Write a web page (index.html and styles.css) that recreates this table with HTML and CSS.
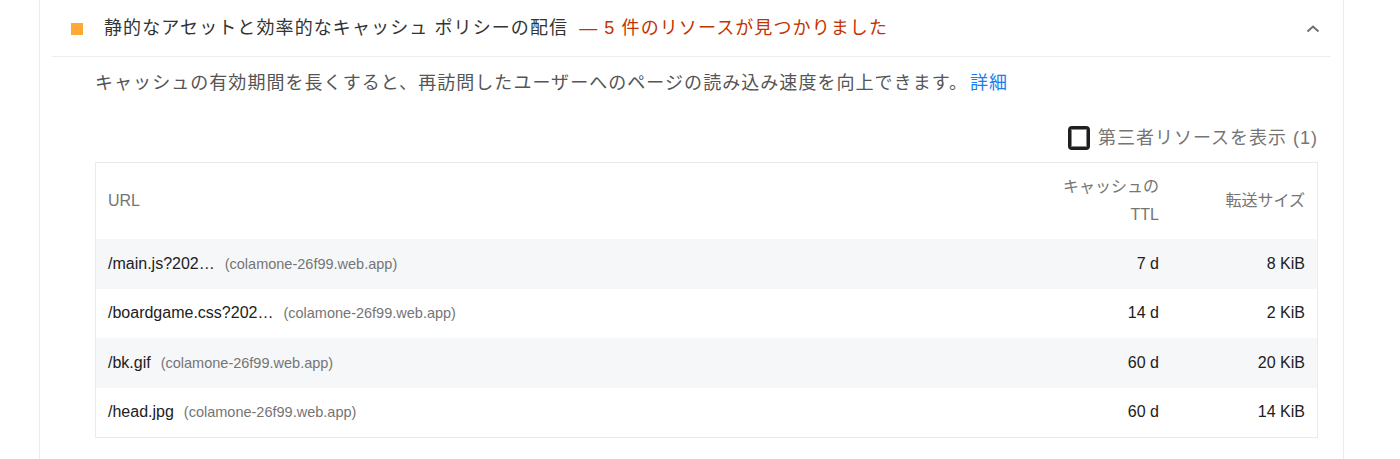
FILE: index.html
```html
<!DOCTYPE html>
<html lang="ja">
<head>
<meta charset="utf-8">
<link rel="stylesheet" href="styles.css">
</head>
<body>
<div class="audit">
  <div class="audit-header">
    <span class="icon-average"></span>
    <span class="title">静的なアセットと効率的なキャッシュ ポリシーの配信</span>
    <span class="display">— 5 件のリソースが見つかりました</span>
    <svg class="chevron" width="14" height="9" viewBox="0 0 14 9"><polyline points="1.5,7.5 7,2.5 12.5,7.5" fill="none" stroke="#6f6f6f" stroke-width="2"/></svg>
  </div>
  <div class="audit-body">
    <p class="desc">キャッシュの有効期間を長くすると、再訪問したユーザーへのページの読み込み速度を向上できます。<a href="#">詳細</a></p>
    <div class="third-party">
      <span class="checkbox"></span>
      <span class="tp-label">第三者リソースを表示 (1)</span>
    </div>
    <table class="details">
      <thead>
        <tr>
          <th class="col-url">URL</th>
          <th class="col-num col-ttl">キャッシュの TTL</th>
          <th class="col-num col-size">転送サイズ</th>
        </tr>
      </thead>
      <tbody>
        <tr class="odd">
          <td class="col-url"><span class="url">/main.js?202…</span><span class="host">(colamone-26f99.web.app)</span></td>
          <td class="col-num">7 d</td>
          <td class="col-num">8 KiB</td>
        </tr>
        <tr>
          <td class="col-url"><span class="url">/boardgame.css?202…</span><span class="host">(colamone-26f99.web.app)</span></td>
          <td class="col-num">14 d</td>
          <td class="col-num">2 KiB</td>
        </tr>
        <tr class="odd">
          <td class="col-url"><span class="url">/bk.gif</span><span class="host">(colamone-26f99.web.app)</span></td>
          <td class="col-num">60 d</td>
          <td class="col-num">20 KiB</td>
        </tr>
        <tr>
          <td class="col-url"><span class="url">/head.jpg</span><span class="host">(colamone-26f99.web.app)</span></td>
          <td class="col-num">60 d</td>
          <td class="col-num">14 KiB</td>
        </tr>
      </tbody>
    </table>
  </div>
</div>
</body>
</html>
```

FILE: styles.css
```css
html, body {
  margin: 0;
  padding: 0;
  background: #ffffff;
}
body {
  font-family: "Liberation Sans", "Noto Sans CJK JP", sans-serif;
  color: #212121;
  height: 459px;
  overflow: hidden;
}
.audit {
  margin-left: 39px;
  width: 1279px;
  padding: 0 12px;
  border-left: 1px solid #ececec;
  border-right: 1px solid #ececec;
  min-height: 459px;
}
.audit-header {
  display: flex;
  align-items: center;
  height: 56px;
  border-bottom: 1px solid #eeeeee;
  padding-left: 19px;
  padding-right: 11px;
}
.icon-average {
  width: 12px;
  height: 12px;
  background: #ffa936;
  flex: none;
  margin-top: 1px;
}
.title {
  margin-left: 21px;
  font-size: 18px;
  line-height: 24px;
  letter-spacing: 1.1px;
  color: #333333;
}
.display {
  margin-left: 11px;
  font-size: 18px;
  line-height: 24px;
  letter-spacing: 1.1px;
  color: #c33300;
}
.chevron {
  margin-left: auto;
  flex: none;
}
.audit-body {
  padding: 0 13px 0 43px;
}
.desc {
  margin: 13px 0 0;
  font-size: 18px;
  line-height: 27px;
  letter-spacing: 1.05px;
  color: #555555;
}
.desc a {
  color: #1a7ef0;
  text-decoration: none;
  margin-left: 2px;
}
.third-party {
  display: flex;
  justify-content: flex-end;
  align-items: center;
  gap: 8px;
  margin-top: 28px;
  height: 26px;
}
.checkbox {
  width: 16px;
  height: 18px;
  border: 3px solid #1f1f1f;
  border-radius: 4px;
  box-shadow: inset 0 0 0 1px #8a8a8a;
  background: #fff;
}
.tp-label {
  font-size: 18px;
  line-height: 24px;
  letter-spacing: 1px;
  color: #757575;
}
.details {
  margin-top: 11px;
  width: 100%;
  border-collapse: collapse;
  border: 1px solid #ebebeb;
  font-size: 16px;
}
.details th {
  font-weight: normal;
  color: #757575;
  height: 76px;
  line-height: 28px;
  padding: 0 12px;
}
.details td {
  height: 49.5px;
  padding: 0 12px;
  line-height: 20px;
  color: #212121;
}
.col-url {
  text-align: left;
}
.col-num {
  text-align: right;
  white-space: nowrap;
}
th.col-ttl {
  width: 100px;
  white-space: normal;
}
th.col-size {
  width: 122px;
}
.details tr.odd td {
  background: #f6f7f9;
}
.url {
  color: #212121;
}
.host {
  margin-left: 10px;
  font-size: 14.5px;
  color: #757575;
}
```
